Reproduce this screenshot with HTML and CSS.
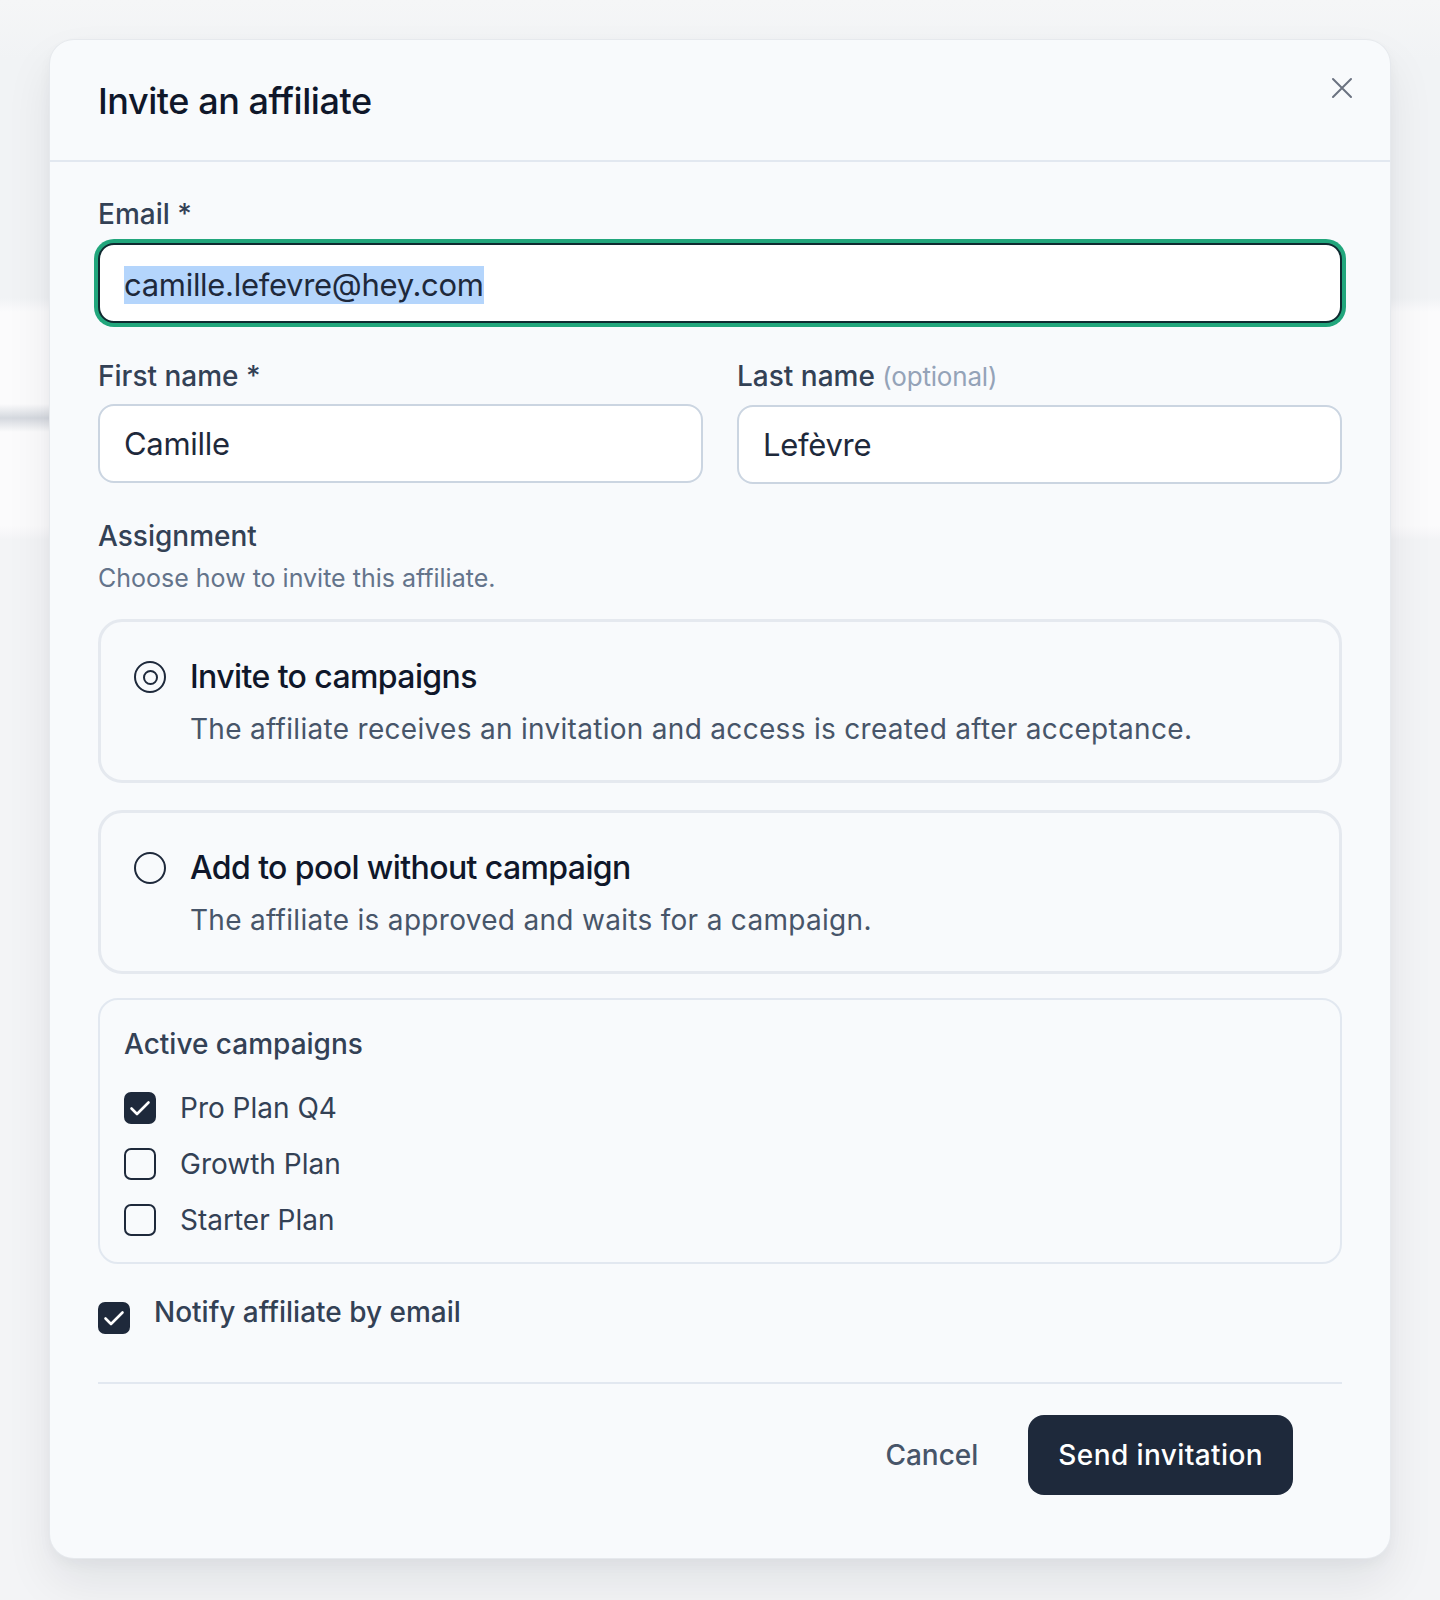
FILE: index.html
```html
<!DOCTYPE html>
<html lang="en">
<head>
    <meta charset="UTF-8">
    <title>Invite an affiliate</title>

    <link rel="stylesheet" href="styles.css">

</head>
<body>

    <div class="modal">
        <div class="modal-header">
            <h2 class="modal-title">Invite an affiliate</h2>
            <button class="close-btn" type="button" aria-label="Close">
                <svg width="22" height="22" viewBox="0 0 22 22" fill="none" stroke="#6b7280" stroke-width="2" stroke-linecap="round">
                    <path d="M2 2 L20 20 M20 2 L2 20" />
                </svg>
            </button>
        </div>

        <form class="modal-body">
            <div class="field">
                <label class="field-label">Email *</label>
                <div class="input input-focus"><span class="selected">camille.lefevre@hey.com</span></div>
            </div>

            <div class="field-row">
                <div class="field">
                    <label class="field-label">First name *</label>
                    <div class="input">Camille</div>
                </div>
                <div class="field">
                    <label class="field-label">Last name <span class="optional">(optional)</span></label>
                    <div class="input">Lefèvre</div>
                </div>
            </div>

            <div class="section">
                <div class="field-label">Assignment</div>
                <p class="section-hint">Choose how to invite this affiliate.</p>

                <div class="options">
                    <label class="option">
                        <span class="radio checked"></span>
                        <span class="option-text">
                            <span class="option-title">Invite to campaigns</span>
                            <span class="option-desc">The affiliate receives an invitation and access is created after acceptance.</span>
                        </span>
                    </label>
                    <label class="option">
                        <span class="radio"></span>
                        <span class="option-text">
                            <span class="option-title">Add to pool without campaign</span>
                            <span class="option-desc">The affiliate is approved and waits for a campaign.</span>
                        </span>
                    </label>
                </div>
            </div>

            <div class="campaigns">
                <div class="campaigns-title">Active campaigns</div>
                <ul class="campaign-list">
                    <li>
                        <span class="checkbox checked">
                            <svg width="32" height="32" viewBox="0 0 32 32" fill="none" stroke="#fff" stroke-width="2.6" stroke-linecap="round" stroke-linejoin="round"><path d="M7.5 16.5 L13 22 L24.5 10.5" /></svg>
                        </span>
                        Pro Plan Q4
                    </li>
                    <li><span class="checkbox"></span>Growth Plan</li>
                    <li><span class="checkbox"></span>Starter Plan</li>
                </ul>
            </div>

            <label class="notify">
                <span class="checkbox checked">
                    <svg width="32" height="32" viewBox="0 0 32 32" fill="none" stroke="#fff" stroke-width="2.6" stroke-linecap="round" stroke-linejoin="round"><path d="M7.5 16.5 L13 22 L24.5 10.5" /></svg>
                </span>
                Notify affiliate by email
            </label>

            <div class="modal-footer">
                <button class="btn-cancel" type="button">Cancel</button>
                <button class="btn-primary" type="button">Send invitation</button>
            </div>
        </form>
    </div>

</body>
</html>
```

FILE: styles.css
```css
* {
    box-sizing: border-box;
}

body {
    margin: 0;
    min-height: 1600px;
    font-family: Inter, "Noto Sans", sans-serif;
    color: #334155;
    background:
        linear-gradient(to bottom, transparent 404px, rgba(200, 205, 213, 0.75) 418px, transparent 432px) left top / 50px 100% no-repeat,
        linear-gradient(to bottom, #f5f6f7 0, #f1f3f5 60px, #f1f3f5 298px, #fbfbfc 312px, #fbfbfc 526px, #f3f4f6 540px, #f3f4f6 100%);
    padding-top: 40px;
}

.modal {
    position: relative;
    width: 1340px;
    margin: 0 auto;
    background-color: #f8fafc;
    border-radius: 24px;
    box-shadow: 0 0 0 1px #e6e9ed, 0 24px 48px rgba(15, 23, 42, 0.08), 0 6px 14px rgba(15, 23, 42, 0.04);
}

/* header */

.modal-header {
    padding: 39px 48px 37px;
    border-bottom: 2px solid #e2e8f0;
}

.modal-title {
    margin: 0;
    font-size: 36px;
    line-height: 44px;
    font-weight: 500;
    color: #0f172a;
    letter-spacing: -0.45px;
}

.close-btn {
    position: absolute;
    top: 28px;
    right: 28px;
    width: 40px;
    height: 40px;
    display: flex;
    align-items: center;
    justify-content: center;
    padding: 0;
    border: none;
    background: none;
    cursor: pointer;
}

/* body */

.modal-body {
    display: flex;
    flex-direction: column;
    padding: 32px 48px 0;
}

.field {
    display: flex;
    flex-direction: column;
    flex: 1;
}

.field-label {
    font-size: 28px;
    line-height: 40px;
    font-weight: 500;
    color: #334155;
    margin-bottom: 9px;
}

.optional {
    font-size: 26px;
    font-weight: 400;
    color: #94a3b8;
    letter-spacing: -0.2px;
}

.input {
    height: 79px;
    display: flex;
    align-items: center;
    padding: 0 24px;
    background-color: #fff;
    border: 2px solid #cbd5e1;
    border-radius: 16px;
    font-size: 31px;
    letter-spacing: -0.3px;
    color: #1e293b;
}

.input-focus {
    height: 80px;
    border-color: #0f2a30;
    box-shadow: 0 0 0 4px #21a67c;
}

.selected {
    background-color: #b4d5fc;
    line-height: 38px;
    margin-top: 3px;
}

.field-row {
    display: flex;
    gap: 34px;
    margin-top: 33px;
}

.field-row .field-label {
    margin-bottom: 8px;
}

.section {
    margin-top: 32px;
}

.section .field-label {
    margin-bottom: 0;
}

.section-hint {
    margin: 4px 0 0;
    font-size: 25px;
    line-height: 36px;
    color: #64748b;
}

.options {
    display: flex;
    flex-direction: column;
    gap: 27px;
    margin-top: 23px;
}

.option {
    display: flex;
    gap: 24px;
    padding: 31px 33px;
    border: 3px solid #e5e9ef;
    border-radius: 24px;
    cursor: pointer;
}

.radio {
    flex: none;
    width: 32px;
    height: 32px;
    margin-top: 8px;
    border: 2.5px solid #1e293b;
    border-radius: 50%;
    display: flex;
    align-items: center;
    justify-content: center;
}

.radio.checked::after {
    content: "";
    width: 15px;
    height: 15px;
    border: 2px solid #1e293b;
    border-radius: 50%;
    box-sizing: border-box;
}

.option-text {
    display: flex;
    flex-direction: column;
    gap: 8px;
}

.option-title {
    font-size: 32px;
    line-height: 48px;
    font-weight: 500;
    color: #0f172a;
    letter-spacing: -0.6px;
}

.option-desc {
    font-size: 28px;
    line-height: 40px;
    color: #475569;
    letter-spacing: 0.3px;
}

/* campaigns */

.campaigns {
    margin-top: 24px;
    padding: 24px 24px 22px;
    border: 2px solid #e2e8f0;
    border-radius: 20px;
}

.campaigns-title {
    font-size: 28px;
    line-height: 40px;
    font-weight: 500;
    color: #334155;
}

.campaign-list {
    list-style: none;
    margin: 24px 0 0;
    padding: 0;
    display: flex;
    flex-direction: column;
    gap: 16px;
}

.campaign-list li {
    display: flex;
    align-items: center;
    gap: 24px;
    font-size: 28px;
    line-height: 40px;
    color: #334155;
}

.checkbox {
    flex: none;
    width: 32px;
    height: 32px;
    border: 2px solid #1e293b;
    border-radius: 7px;
    display: flex;
    align-items: center;
    justify-content: center;
}

.checkbox.checked {
    background-color: #1e293b;
}

.checkbox svg {
    flex: none;
}

.notify {
    display: flex;
    align-items: flex-start;
    gap: 24px;
    margin-top: 28px;
    font-size: 28px;
    line-height: 40px;
    font-weight: 500;
    color: #334155;
}

.notify .checkbox {
    margin-top: 10px;
}

/* footer */

.modal-footer {
    display: flex;
    justify-content: flex-end;
    align-items: center;
    gap: 18px;
    margin-top: 48px;
    padding: 31px 49px 63px 0;
    border-top: 2px solid #e2e8f0;
}

.btn-cancel {
    height: 80px;
    padding: 0 32px;
    border: none;
    background: none;
    font-family: inherit;
    font-size: 28px;
    font-weight: 500;
    color: #475569;
    cursor: pointer;
}

.btn-primary {
    height: 80px;
    padding: 0 30px;
    border: none;
    border-radius: 16px;
    background-color: #1e293b;
    font-family: inherit;
    font-size: 28px;
    font-weight: 500;
    letter-spacing: 0.4px;
    color: #fff;
    cursor: pointer;
}
```
